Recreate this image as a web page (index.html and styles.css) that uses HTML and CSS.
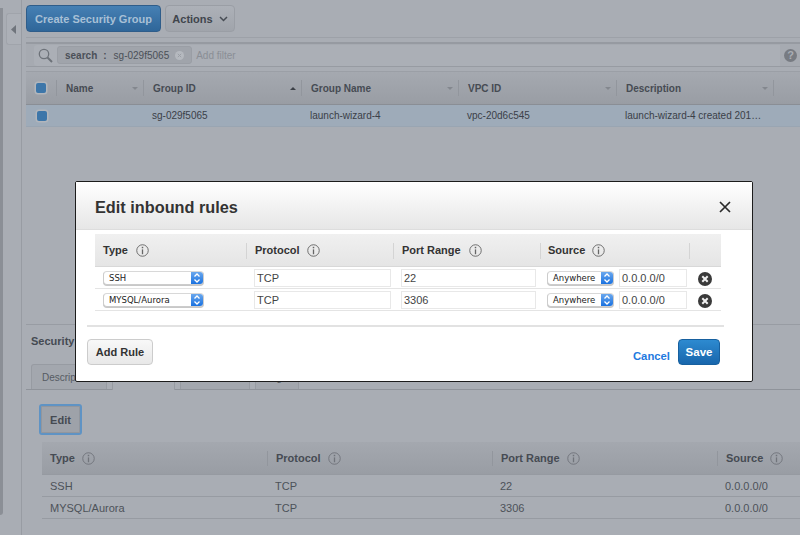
FILE: index.html
```html
<!DOCTYPE html>
<html lang="en">
<head>
<meta charset="utf-8">
<title>Edit inbound rules</title>
<link rel="stylesheet" href="styles.css">
</head>
<body>
<svg class="defs" width="0" height="0" aria-hidden="true">
  <symbol id="i-info" viewBox="0 0 14 14">
    <circle cx="7" cy="7" r="6.2" fill="none" stroke="currentColor" stroke-width="1"/>
    <rect x="6.2" y="3" width="1.6" height="1.6" fill="currentColor"/>
    <rect x="6.3" y="5.8" width="1.4" height="5.2" fill="currentColor"/>
  </symbol>
  <symbol id="i-remove" viewBox="0 0 14 14">
    <circle cx="7" cy="7" r="7" fill="#3a3a3a"/>
    <path d="M4.3 4.3l5.4 5.4M9.7 4.3l-5.4 5.4" stroke="#f2f2f2" stroke-width="2" fill="none"/>
  </symbol>
  <symbol id="i-updown" viewBox="0 0 8 12">
    <path d="M1.5 4.5L4 2l2.5 2.5M1.5 7.5L4 10l2.5-2.5" stroke="#fff" stroke-width="1.3" fill="none"/>
  </symbol>
</svg>

<div class="page">
  <aside class="rail">
    <div class="rail-edge"></div>
    <div class="rail-tab"><svg width="6" height="9" viewBox="0 0 6 9"><path d="M5 0v9L0 4.500z" fill="#6f747c"/></svg></div>
  </aside>

  <main class="content">
    <div class="toolbar">
      <button class="btn-primary">Create Security Group</button>
      <button class="btn-actions">Actions <svg width="9" height="6" viewBox="0 0 9 6"><path d="M1 1l3.500 3.500L8 1" fill="none" stroke="#474c54" stroke-width="1.500"/></svg></button>
    </div>

    <div class="searchbar">
      <div class="searchbox">
        <svg width="15" height="15" viewBox="0 0 15 15"><circle cx="6" cy="6" r="4.700" fill="none" stroke="#6d7279" stroke-width="1.300"/><path d="M9.500 9.500l4.500 4.500" stroke="#6d7279" stroke-width="2"/></svg>
        <span class="token"><b>search</b><b class="colon">:</b><span>sg-029f5065</span>
          <svg width="9" height="9" viewBox="0 0 9 9"><circle cx="4.500" cy="4.500" r="4.500" fill="#b5b9bf"/><path d="M2.800 2.800l3.400 3.400M6.200 2.800L2.800 6.200" stroke="#9a9ea5" stroke-width="1"/></svg>
        </span>
        <span class="placeholder">Add filter</span>
      </div>
      <span class="help">?</span>
    </div>

    <div class="grid-head">
      <div class="cell cell-check"><span class="check"></span></div>
      <div class="cell">Name<i class="caret"></i></div>
      <div class="cell">Group ID<i class="caret caret-up"></i></div>
      <div class="cell">Group Name<i class="caret"></i></div>
      <div class="cell">VPC ID<i class="caret"></i></div>
      <div class="cell">Description<i class="caret"></i></div>
      <div class="cell"></div>
    </div>
    <div class="grid-row">
      <div class="cell cell-check"><span class="check"></span></div>
      <div class="cell"></div>
      <div class="cell">sg-029f5065</div>
      <div class="cell">launch-wizard-4</div>
      <div class="cell">vpc-20d6c545</div>
      <div class="cell">launch-wizard-4 created 201…</div>
      <div class="cell"></div>
    </div>

    <section class="details">
      <h2 class="details-title">Security Group: sg-029f5065</h2>
      <div class="tabs">
        <span class="tab tab-desc">Description</span>
        <span class="tab tab-active">Inbound</span>
        <span class="tab tab-out">Outbound</span>
        <span class="tab tab-tags">Tags</span>
      </div>
      <button class="btn-edit">Edit</button>
      <div class="rules-head">
        <div class="rules-cell">Type<svg class="info"><use href="#i-info"/></svg></div>
        <div class="rules-cell">Protocol<svg class="info"><use href="#i-info"/></svg></div>
        <div class="rules-cell">Port Range<svg class="info"><use href="#i-info"/></svg></div>
        <div class="rules-cell">Source<svg class="info"><use href="#i-info"/></svg></div>
      </div>
      <div class="rules-row"><div>SSH</div><div>TCP</div><div>22</div><div>0.0.0.0/0</div></div>
      <div class="rules-row"><div>MYSQL/Aurora</div><div>TCP</div><div>3306</div><div>0.0.0.0/0</div></div>
    </section>
  </main>
</div>

<div class="modal">
  <header class="modal-head">
    <h1>Edit inbound rules</h1>
    <svg class="modal-close" width="12" height="12" viewBox="0 0 12 12"><path d="M1 1l10 10M11 1L1 11" stroke="#2b2b2b" stroke-width="1.700"/></svg>
  </header>
  <div class="modal-body">
    <div class="edit-head">
      <div class="edit-th">Type<svg class="info"><use href="#i-info"/></svg></div>
      <div class="edit-th">Protocol<svg class="info"><use href="#i-info"/></svg></div>
      <div class="edit-th">Port Range<svg class="info"><use href="#i-info"/></svg></div>
      <div class="edit-th">Source<svg class="info"><use href="#i-info"/></svg></div>
      <div class="edit-th"></div>
    </div>
    <div class="edit-row">
      <div class="edit-td"><span class="select select-type"><span class="select-label">SSH</span><span class="select-arrow"><svg width="8" height="12"><use href="#i-updown"/></svg></span></span></div>
      <div class="edit-td"><span class="field">TCP</span></div>
      <div class="edit-td"><span class="field">22</span></div>
      <div class="edit-td source"><span class="select select-src"><span class="select-label">Anywhere</span><span class="select-arrow"><svg width="8" height="12"><use href="#i-updown"/></svg></span></span><span class="field field-cidr">0.0.0.0/0</span></div>
      <div class="edit-td remove"><svg width="14" height="14"><use href="#i-remove"/></svg></div>
    </div>
    <div class="edit-row">
      <div class="edit-td"><span class="select select-type"><span class="select-label">MYSQL/Aurora</span><span class="select-arrow"><svg width="8" height="12"><use href="#i-updown"/></svg></span></span></div>
      <div class="edit-td"><span class="field">TCP</span></div>
      <div class="edit-td"><span class="field">3306</span></div>
      <div class="edit-td source"><span class="select select-src"><span class="select-label">Anywhere</span><span class="select-arrow"><svg width="8" height="12"><use href="#i-updown"/></svg></span></span><span class="field field-cidr">0.0.0.0/0</span></div>
      <div class="edit-td remove"><svg width="14" height="14"><use href="#i-remove"/></svg></div>
    </div>
  </div>
  <footer class="modal-foot">
    <button class="btn-add">Add Rule</button>
    <a class="cancel">Cancel</a>
    <button class="btn-save">Save</button>
  </footer>
</div>
</body>
</html>
```
FILE: styles.css
```css
* { box-sizing: border-box; }
html, body { margin: 0; height: 535px; overflow: hidden; }
body { background: #a9adb4; font-family: "Liberation Sans", Arial, sans-serif; font-size: 10px; color: #3b4048; position: relative; }
button { font-family: inherit; margin: 0; padding: 0; }
.defs { position: absolute; }
.page { display: flex; height: 535px; width: 800px; overflow: hidden; }

/* left rail */
.rail { width: 22px; margin-right: 4px; flex: none; display: flex; align-items: flex-start; border-right: 1px solid #989ca3; }
.rail-edge { width: 3px; height: 507px; background: #8b8f96; border-radius: 0 0 3px 0; margin-top: 8px; }
.rail-tab { width: 15px; height: 32px; margin: 13px 0 0 3px; border: 1px solid #a0a4ab; border-right: 0; border-radius: 3px 0 0 3px; display: flex; align-items: center; justify-content: center; background: #acb0b7; }
.content { flex: 1; min-width: 0; }

/* toolbar */
.toolbar { display: flex; gap: 4px; height: 38px; padding-top: 5px; border-bottom: 1px solid #9da1a8; }
.btn-primary { width: 135px; height: 27px; border: 1px solid #2f5d8a; border-radius: 4px; background: linear-gradient(#4680b4, #2f6699); color: #a8c0d6; font-size: 11px; font-weight: bold; }
.btn-actions { width: 70px; height: 27px; border: 1px solid #9a9ea5; border-radius: 4px; background: linear-gradient(#adb1b8, #a0a4ab); color: #40454d; font-size: 11px; font-weight: bold; display: flex; align-items: center; justify-content: center; gap: 6px; }

/* search */
.searchbar { height: 25px; margin-top: 4px; padding: 0 3px 0 8px; display: flex; align-items: center; gap: 4px; background: #a6aab1; border-top: 2px solid #969aa1; border-bottom: 1px solid #979ba2; }
.searchbox { flex: 1; display: flex; align-items: center; gap: 4px; height: 21px; padding-left: 4px; background: #abafb6; border-radius: 3px 0 0 3px; }
.token { display: flex; align-items: center; gap: 0; height: 18px; padding: 0 7px; background: #a0a4ab; border: 1px solid #9a9ea5; border-radius: 3px; color: #4b5058; }
.token .colon { margin: 0 7px 0 6px; }
.token svg { margin-left: 6px; }
.placeholder { margin-left: 0; color: #8a8e95; }
.help { width: 13px; height: 13px; border-radius: 50%; background: #777b82; color: #a9adb4; font-size: 11px; font-weight: bold; line-height: 13px; text-align: center; flex: none; }

/* security group table */
.grid-head, .grid-row { display: grid; grid-template-columns: 31px 87px 158px 157px 158px 157px 26px; }
.grid-head { height: 34px; margin-top: 4px; background: linear-gradient(#a5a9b0, #999da4); border-top: 1px solid #9b9fa6; border-bottom: 1px solid #8a8e95; font-weight: bold; color: #464b53; }
.grid-row { height: 22px; background: #9eabb9; border-bottom: 1px solid #99a5b2; white-space: nowrap; }
.cell { position: relative; display: flex; align-items: center; padding-left: 9px; }
.grid-head .cell::after { content: ""; position: absolute; right: 0; top: 8px; height: 16px; width: 1px; background: #92969d; }
.grid-head .cell:last-child::after { display: none; }
.cell-check { padding-left: 10px; }
.grid-row .cell { padding-left: 8px; }
.grid-row .cell-check { padding-left: 11px; }
.check { width: 10px; height: 10px; border-radius: 2px; background: #3d76a9; box-shadow: 0 0 0 1.500px #b2b6bc; }
.caret { position: absolute; right: 6px; top: 15px; width: 0; height: 0; border: 3px solid transparent; border-top: 3px solid #83878e; border-bottom: 0; }
.caret-up { border-top: 0; border-bottom: 3px solid #3c4047; }

/* lower details */
.details { margin-top: 197px; border-top: 1px solid #989ca3; position: relative; }
.details-title { margin: 0; padding: 9px 0 0 5px; height: 39px; font-size: 11px; font-weight: bold; color: #454a52; line-height: 14px; }
.tabs { display: flex; gap: 5px; height: 26px; padding-left: 5px; border-bottom: 1px solid #8f939a; }
.tab { display: flex; align-items: center; height: 25px; padding-left: 10px; color: #565b63; background: #a3a7ae; border: 1px solid #979ba2; border-bottom: 0; border-radius: 3px 3px 0 0; }
.tab-desc { width: 76px; white-space: nowrap; overflow: hidden; }
.tab-active { width: 63px; background: #a9adb4; height: 26px; }
.tab-out { width: 70px; }
.tab-tags { width: 44px; }
.btn-edit { display: block; margin: 14px 0 0 13px; width: 43px; height: 31px; border: 2px solid #5f93c4; border-radius: 3px; background: #9ea2a9; box-shadow: inset 0 0 0 1px #92969d; color: #454a52; font-size: 11px; font-weight: bold; }
.rules-head, .rules-row { display: grid; grid-template-columns: 225px 225px 225px 225px; margin-left: 16px; font-size: 11px; }
.rules-head { height: 33px; margin-top: 7px; background: linear-gradient(#a4a8af, #999da4); border-bottom: 1px solid #969aa1; font-weight: bold; color: #464b53; }
.rules-cell { display: flex; align-items: center; gap: 7px; padding-left: 8px; position: relative; }
.rules-cell + .rules-cell { padding-left: 9px; }
.rules-cell + .rules-cell::before { content: ""; position: absolute; left: 0; top: 9px; height: 15px; width: 1px; background: #92969d; }
.rules-row { height: 22px; border-bottom: 1px solid #979ba2; color: #4d5259; align-items: center; }
.rules-row div { padding-left: 8px; }
.info { width: 13px; height: 13px; color: #70747b; flex: none; }

/* modal */
.modal { position: absolute; left: 75px; top: 181px; width: 678px; height: 201px; background: #fff; border: 1px solid #1c1c1c; border-radius: 2px; display: flex; flex-direction: column; }
.modal-head { height: 48px; flex: none; display: flex; align-items: center; justify-content: space-between; padding: 3px 21px 0 19px; background: linear-gradient(#fff, #e6e6e6); border-bottom: 1px solid #ddd; }
.modal-head h1 { margin: 0; font-size: 16.300px; font-weight: bold; color: #333; }
.modal-body { margin: 4px 31px 0 19px; height: 77px; }
.edit-head, .edit-row { display: grid; grid-template-columns: 151px 147px 147px 149px 32px; }
.edit-head { height: 33px; background: linear-gradient(#f0f0f0, #e5e5e5); border-bottom: 1px solid #d8d8d8; }
.edit-th { display: flex; align-items: center; gap: 8px; padding-left: 8px; position: relative; font-size: 11px; font-weight: bold; color: #333; }
.edit-th + .edit-th { padding-left: 9px; }
.edit-th:nth-child(2) { gap: 7px; }
.edit-th:nth-child(4) { padding-left: 8px; gap: 7px; }
.edit-th + .edit-th::before { content: ""; position: absolute; left: 0; top: 9px; height: 16px; width: 1px; background: #d4d4d4; }
.edit-th .info { color: #666; }
.edit-row { height: 22px; border-bottom: 1px solid #e4e4e4; }
.edit-td { display: flex; align-items: center; padding-left: 8px; }
.source { gap: 5px; padding-left: 7px; }
.remove { padding-left: 9px; padding-top: 2px; }
.field { display: flex; align-items: center; width: 137px; height: 18px; padding: 0 2px; border: 1px solid #e8e8e8; font-size: 11px; color: #444; background: #fff; }
.edit-td:nth-child(3) .field { width: 135px; }
.source .field-cidr { width: 68px; }
.select { display: flex; height: 14px; border-radius: 4px; border: 1px solid #ccc; border-top-color: #d8d8d8; background: #fff; font-family: "DejaVu Sans", sans-serif; font-size: 8.500px; color: #222; overflow: hidden; box-shadow: 0 1px 0 #c8c8c8; }
.select-type { width: 101px; }
.select-src { width: 67px; }
.select-label { flex: 1; line-height: 13px; padding-left: 5px; }
.select-arrow { width: 12px; background: linear-gradient(#6aa8ee, #1a72e0); display: flex; align-items: center; justify-content: center; }
.modal-foot { display: flex; align-items: center; margin: 14px 28px 0 11px; padding-top: 12px; border-top: 2px solid #e2e2e2; }
.btn-add { width: 66px; height: 26px; border: 1px solid #ccc; border-radius: 4px; background: linear-gradient(#f8f8f8, #e8e8e8); font-size: 11px; font-weight: bold; color: #333; }
.cancel { margin-left: auto; margin-right: 8px; padding-top: 7px; color: #1f7ae0; font-size: 11.300px; font-weight: bold; }
.btn-save { width: 42px; height: 26px; margin-right: 4px; border: 1px solid #17609f; border-radius: 4px; background: linear-gradient(#2d8ad0, #1866ac); color: #fff; font-size: 11.500px; font-weight: bold; }
```
